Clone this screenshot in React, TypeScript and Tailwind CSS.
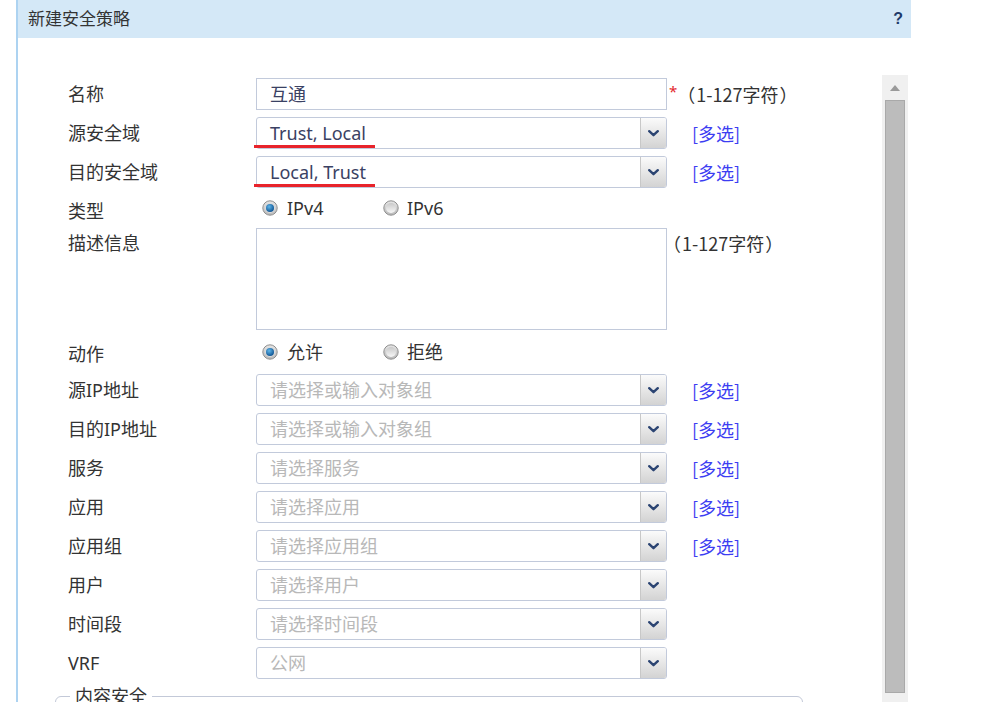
import React from "react";

const FONT = "font-['Noto_Sans','Noto_Sans_CJK_SC',sans-serif]";
const CJK = "font-['Noto_Sans_CJK_SC',sans-serif]";

function Chevron() {
  return (
    <svg width="11" height="7" viewBox="0 0 11 7">
      <path d="M1.2 1.2 L5.5 5.2 L9.8 1.2" fill="none" stroke="#2b4472" strokeWidth="2.4" strokeLinecap="round" strokeLinejoin="round" />
    </svg>
  );
}

function Radio({ checked }: { checked: boolean }) {
  return (
    <svg width="16" height="16" viewBox="0 0 16 16">
      <defs>
        <linearGradient id="rg" x1="0" y1="0" x2="0" y2="1">
          <stop offset="0" stopColor="#e6e6e6" />
          <stop offset="1" stopColor="#b9b9b9" />
        </linearGradient>
        <linearGradient id="rw" x1="0" y1="0" x2="0" y2="1">
          <stop offset="0" stopColor="#c9c9c9" />
          <stop offset="1" stopColor="#f7f7f7" />
        </linearGradient>
        <radialGradient id="bg" cx="0.4" cy="0.35" r="0.7">
          <stop offset="0" stopColor="#5fb6ea" />
          <stop offset="1" stopColor="#0b4f8e" />
        </radialGradient>
      </defs>
      <circle cx="8" cy="8" r="7.2" fill="url(#rg)" stroke="#8e8e8e" strokeWidth="1" />
      {checked ? (
        <>
          <circle cx="8" cy="8" r="5" fill="#dcdcdc" />
          <circle cx="8" cy="8" r="4" fill="url(#bg)" />
        </>
      ) : (
        <circle cx="8" cy="8" r="5" fill="url(#rw)" />
      )}
    </svg>
  );
}

function Select({ value, placeholder, underline }: { value?: string; placeholder?: string; underline?: boolean }) {
  return (
    <div className="relative flex h-[32px] w-[411px] rounded-[3px] border border-[#c2cadb] bg-white">
      <div className={`flex flex-1 items-center pl-[13px] text-[18px] ${value ? "text-[#3a4163]" : "text-[#b8b8b8]"}`}>
        {value ?? placeholder}
      </div>
      <div className="flex w-[26px] items-center justify-center rounded-r-[2px] border-l border-[#c8c8c8] bg-gradient-to-b from-[#fbfbfb] to-[#d3d3d3]">
        <Chevron />
      </div>
      {underline && <div className="absolute bottom-[0px] left-[-3px] h-[3px] w-[121px] bg-[#e8232b]" />}
    </div>
  );
}

function Label({ children }: { children: React.ReactNode }) {
  return <div className="w-[188px] shrink-0 text-[18px] text-[#333]">{children}</div>;
}

function Multi() {
  return <span className={`ml-[25px] text-[18px] text-[#3d3df2] ${CJK}`}>[多选]</span>;
}

function Hint({ className }: { className: string }) {
  return (
    <span className={`flex whitespace-nowrap text-[18px] text-[#333] ${CJK} ${className}`}>
      <span>（</span>
      <span className="ml-[1px]">1-127字符</span>
      <span className="ml-[1px]">）</span>
    </span>
  );
}

function RadioGroup({ a, b }: { a: string; b: string }) {
  return (
    <div className="flex items-center text-[18px] text-[#333]">
      <div className="ml-[6px] flex w-[121px] items-center gap-[9px]">
        <Radio checked />
        <span>{a}</span>
      </div>
      <div className="flex items-center gap-[8px]">
        <Radio checked={false} />
        <span>{b}</span>
      </div>
    </div>
  );
}

export default function App() {
  const rows: { label: string; value?: string; placeholder?: string; multi?: boolean }[] = [
    { label: "源IP地址", placeholder: "请选择或输入对象组", multi: true },
    { label: "目的IP地址", placeholder: "请选择或输入对象组", multi: true },
    { label: "服务", placeholder: "请选择服务", multi: true },
    { label: "应用", placeholder: "请选择应用", multi: true },
    { label: "应用组", placeholder: "请选择应用组", multi: true },
    { label: "用户", placeholder: "请选择用户" },
    { label: "时间段", placeholder: "请选择时间段" },
    { label: "VRF", placeholder: "公网" },
  ];

  return (
    <div className={`h-[702px] w-[991px] overflow-hidden bg-white ${FONT}`}>
      <div className="ml-[16px] flex h-full w-[895px] flex-col border-l-2 border-[#add3f1]">
        <div className="flex h-[38px] shrink-0 items-center justify-between bg-[#d4e8f7] pl-[10px] pr-[8px]">
          <span className="text-[17px] text-[#333]">新建安全策略</span>
          <span className="font-['Liberation_Sans',sans-serif] text-[16px] font-bold text-[#1f3b6a]">?</span>
        </div>
        <div className="flex flex-1">
          <div className="flex flex-1 flex-col pl-[37px] pt-[40px]">
            <div className="flex flex-col gap-[7px] pl-[13px]">
              <div className="flex h-[32px] items-center">
                <Label>名称</Label>
                <div className="flex h-[32px] w-[411px] items-center border border-[#c2cadb] pl-[13px] text-[18px] text-[#3a4163]">互通</div>
                <span className="ml-[2px] self-start pt-[2px] text-[15px] text-[#e3262c]">*</span>
                <Hint className="" />
              </div>
              <div className="flex h-[32px] items-center">
                <Label>源安全域</Label>
                <Select value="Trust, Local" underline />
                <Multi />
              </div>
              <div className="flex h-[32px] items-center">
                <Label>目的安全域</Label>
                <Select value="Local, Trust" underline />
                <Multi />
              </div>
              <div className="flex h-[26px] items-center">
                <div className="w-[188px] shrink-0 pt-[6px] text-[18px] text-[#333]">类型</div>
                <RadioGroup a="IPv4" b="IPv6" />
              </div>
              <div className="flex items-start">
                <div className="w-[188px] shrink-0 pt-[2px] text-[18px] text-[#333]">描述信息</div>
                <div className="h-[102px] w-[411px] border border-[#c2cadb] bg-white" />
                <Hint className="ml-[-4px] pt-[2px]" />
              </div>
              <div className="flex h-[30px] items-center">
                <div className="w-[188px] shrink-0 pt-[4px] text-[18px] text-[#333]">动作</div>
                <RadioGroup a="允许" b="拒绝" />
              </div>
              {rows.map((r) => (
                <div key={r.label} className="flex h-[32px] items-center">
                  <Label>{r.label}</Label>
                  <Select placeholder={r.placeholder} />
                  {r.multi && <Multi />}
                </div>
              ))}
            </div>
            <fieldset className="mt-[6px] h-[60px] w-[748px] rounded-[6px] border border-[#c3c9d8] px-[14px]">
              <legend className="px-[5px] text-[18px] leading-[22px] text-[#333]">内容安全</legend>
            </fieldset>
          </div>
          <div className="mr-[3px] mt-[37px] flex w-[26px] flex-col items-center bg-[#f0f0f0]">
            <div className="flex h-[25px] items-center justify-center">
              <svg width="10" height="6" viewBox="0 0 10 6">
                <path d="M0 6 L5 0 L10 6 Z" fill="#9a9a9a" />
              </svg>
            </div>
            <div className="h-[593px] w-[20px] border border-[#a9a9a9] bg-[#bcbcbc]" />
          </div>
        </div>
      </div>
    </div>
  );
}
